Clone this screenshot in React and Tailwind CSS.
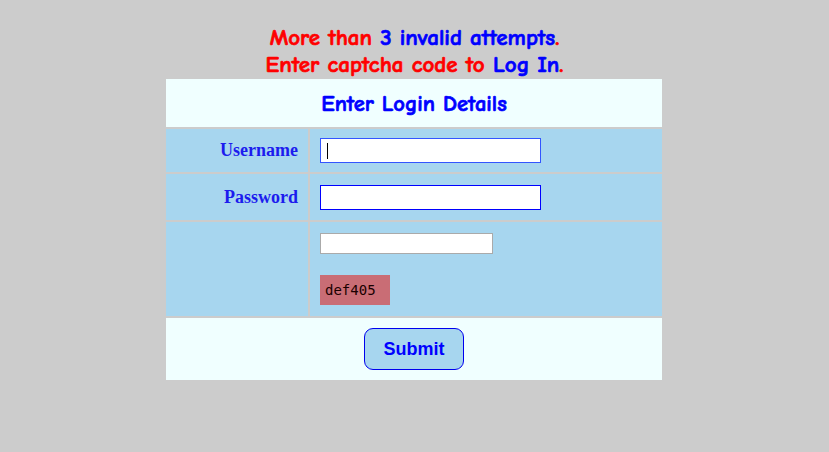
const COMIC = { fontFamily: '"Comic Sans MS", "Comic Neue", "Open Sans", sans-serif' }

function Field({ width, border }) {
  return (
    <input
      type="text"
      className={`h-[25px] bg-white px-1 outline-none ${width} ${border}`}
    />
  )
}

export default function App() {
  return (
    <div className="min-h-screen bg-[#cccccc] pt-[24px]">
      <div
        className="text-center text-[23px] font-bold leading-[27px] [-webkit-text-stroke:0.7px]"
        style={COMIC}
      >
        <div>
          <span className="text-[#ff0000]">More than </span>
          <span className="text-[#0000ff]">3 invalid attempts</span>
          <span className="text-[#ff0000]">.</span>
        </div>
        <div>
          <span className="text-[#ff0000]">Enter captcha code to </span>
          <span className="text-[#0000ff]">Log In</span>
          <span className="text-[#ff0000]">.</span>
        </div>
      </div>

      <div className="ml-[166px] mt-px flex w-[496px] flex-col gap-[2px]">
        <div
          className="flex h-[48px] items-center justify-center bg-[#f0ffff] pt-[3px] text-[22.5px] font-bold text-[#0000ff] [-webkit-text-stroke:0.7px]"
          style={COMIC}
        >
          Enter Login Details
        </div>

        <div className="grid grid-cols-[142px_1fr] gap-x-[2px] gap-y-[2px]">
          <Label>Username</Label>
          <div className="flex h-[43px] items-center bg-[#a7d6ef] pl-[10px]">
            <div className="relative">
              <Field width="w-[221px]" border="border border-[#3355ff]" />
              <span className="absolute left-[7px] top-[5px] h-[16px] w-px bg-black" />
            </div>
          </div>

          <Label>Password</Label>
          <div className="flex h-[46px] items-center bg-[#a7d6ef] pl-[10px]">
            <Field width="w-[221px]" border="border border-[#0000ff]" />
          </div>

          <div className="h-[94px] bg-[#a7d6ef]" />
          <div className="flex h-[94px] flex-col items-start bg-[#a7d6ef] pl-[10px] pt-[11px]">
            <input
              type="text"
              className="h-[21px] w-[173px] border border-[#aaaaaa] bg-white outline-none"
            />
            <div
              className="mt-[21px] flex h-[30px] w-[70px] items-center bg-[#c96d75] pl-[5px] text-[14px] text-[#1a0000]"
              style={{ fontFamily: '"DejaVu Sans Mono", "Liberation Mono", monospace' }}
            >
              def405
            </div>
          </div>
        </div>

        <div className="flex h-[62px] items-center justify-center bg-[#f0ffff]">
          <button
            type="button"
            className="h-[42px] w-[100px] rounded-[9px] border border-[#0000ee] bg-[#a7d6ef] text-[18px] font-bold text-[#0000ff]"
            style={{ fontFamily: '"Liberation Sans", Arial, sans-serif' }}
          >
            Submit
          </button>
        </div>
      </div>
    </div>
  )
}

function Label({ children }) {
  return (
    <div
      className="flex items-center justify-end bg-[#a7d6ef] pr-[10px] text-[18px] font-bold text-[#1c1cee]"
      style={{ fontFamily: '"Liberation Serif", "Times New Roman", serif' }}
    >
      {children}
    </div>
  )
}
